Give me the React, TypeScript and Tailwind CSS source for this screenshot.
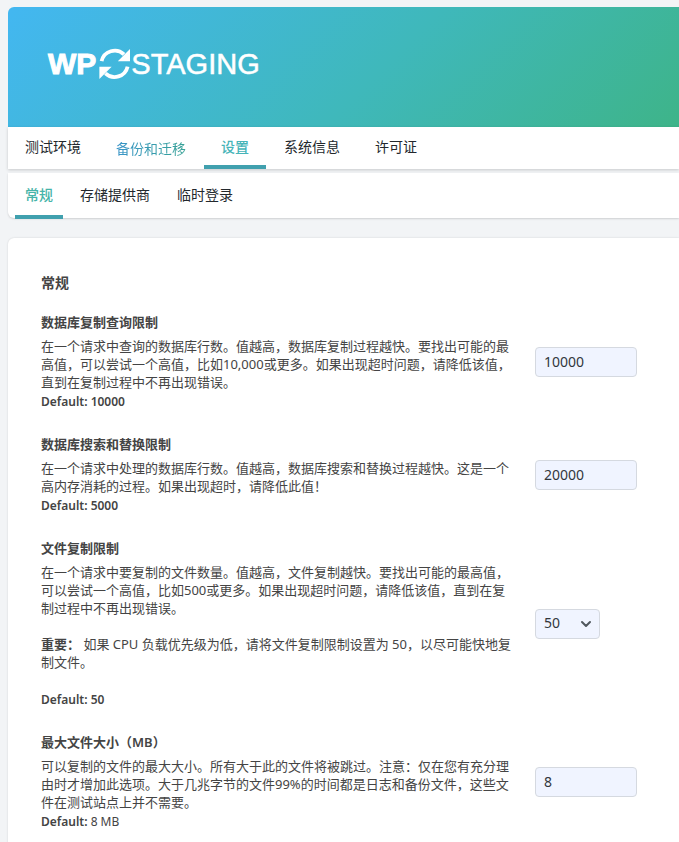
import { useState, type ReactNode } from "react";
import { ChevronDown } from "lucide-react";

const mainTabs = ["测试环境", "备份和迁移", "设置", "系统信息", "许可证"];
const subTabs = ["常规", "存储提供商", "临时登录"];

function Logo() {
  return (
    <a href="#" className="flex h-8 items-center font-['Liberation_Sans',Arial,sans-serif] text-[30px] leading-8 text-white">
      <span className="font-bold [-webkit-text-stroke:1px_white]">WP</span>
      <svg className="ml-[3px] h-8 w-8" viewBox="0 0 32 32" aria-hidden="true">
        <path d="M2.6 13.2A13.4 13.4 0 0 1 25 6.4" fill="none" stroke="currentColor" strokeWidth="3.8" />
        <path d="M31 1v12.3H18.8z" fill="currentColor" />
        <path d="M28.6 18.6A13.4 13.4 0 0 1 6.4 25.4" fill="none" stroke="currentColor" strokeWidth="3.8" />
        <path d="M.4 31V18.7h12.2z" fill="currentColor" />
      </svg>
      <span className="text-[29px] [-webkit-text-stroke:0.5px_white]">STAGING</span>
    </a>
  );
}

function Row({ id, title, children, control }: { id: string; title: string; children: ReactNode; control: ReactNode }) {
  return (
    <div className="flex items-center gap-6 py-3">
      <div className="w-[470px] shrink-0">
        <label htmlFor={id} className="mb-1.5 block font-semibold">
          {title}
        </label>
        <div>{children}</div>
      </div>
      {control}
    </div>
  );
}

function DefaultNote({ children }: { children: ReactNode }) {
  return <p className="mt-0.5 text-xs leading-[18px]">{children}</p>;
}

function NumberBox({ id, initial }: { id: string; initial: string }) {
  const [value, setValue] = useState(initial);
  return (
    <input
      id={id}
      type="text"
      inputMode="numeric"
      value={value}
      onChange={(e) => setValue(e.target.value)}
      className="h-[30px] w-[102px] rounded border border-[#d5d9e0] bg-[#f0f4ff] px-2 pb-0.5 text-sm text-[#32373c]"
    />
  );
}

export default function App() {
  return (
    <div className="min-h-screen overflow-x-hidden bg-[#f2f4f6] pt-[7px] pl-2 font-['Noto_Sans','Noto_Sans_CJK_SC',sans-serif] text-[13px] leading-[18px] text-[#444]">
      <header className="flex h-[120px] items-center rounded-tl-md bg-[linear-gradient(135deg,#43b7f1_0%,#3fb8bb_55%,#3eb489_100%)] px-10 pb-1.5">
        <Logo />
      </header>

      <nav className="mb-1 flex h-[42px] gap-px bg-white text-sm text-[#23282d] shadow-[0_1px_3px_rgba(0,0,0,0.18)]">
        {mainTabs.map((t) => (
          <a
            key={t}
            href="#"
            className={
              t === "设置"
                ? "border-b-4 border-[#40a0ae] px-[17px] pt-2.5 font-medium text-[#46b4b8]"
                : t === "备份和迁移"
                  ? "px-[17px] pt-3"
                  : "px-[17px] pt-2.5"
            }
          >
            {t === "备份和迁移" ? (
              <span className="bg-linear-to-r from-[#3a94c8] to-[#38a296] bg-clip-text text-transparent">{t}</span>
            ) : (
              t
            )}
          </a>
        ))}
      </nav>

      <nav className="flex h-[45px] gap-[7px] rounded-bl-md bg-white pl-[7px] text-sm text-[#23282d] shadow-[0_1px_2px_rgba(0,0,0,0.15)]">
        {subTabs.map((t, i) => (
          <a
            key={t}
            href="#"
            className={
              i === 0
                ? "h-[46px] border-b-4 border-[#40a0ae] px-2.5 pt-3 font-medium text-[#46b4a8]"
                : "px-2.5 pt-3"
            }
          >
            {t}
          </a>
        ))}
      </nav>

      <main className="mt-5 rounded-tl-md bg-white pt-[35px] pr-10 pb-8 pl-[33px] shadow-[0_0_2px_rgba(0,0,0,0.15)]">
        <h1 className="mb-2 text-sm font-semibold">常规</h1>

        <Row id="query-limit" title="数据库复制查询限制" control={<NumberBox id="query-limit" initial="10000" />}>
          <p>
            在一个请求中查询的数据库行数。值越高，数据库复制过程越快。要找出可能的最高值，可以尝试一个高值，比如10,000或更多。如果出现超时问题，请降低该值，直到在复制过程中不再出现错误。
          </p>
          <DefaultNote>
            <strong className="font-semibold">Default: 10000</strong>
          </DefaultNote>
        </Row>

        <Row id="replace-limit" title="数据库搜索和替换限制" control={<NumberBox id="replace-limit" initial="20000" />}>
          <p>
            在一个请求中处理的数据库行数。值越高，数据库搜索和替换过程越快。这是一个高内存消耗的过程。如果出现超时，请降低此值！
          </p>
          <DefaultNote>
            <strong className="font-semibold">Default: 5000</strong>
          </DefaultNote>
        </Row>

        <Row
          id="file-limit"
          title="文件复制限制"
          control={
            <div className="relative">
              <select
                id="file-limit"
                defaultValue="50"
                className="block h-[30px] w-[65px] appearance-none rounded border border-[#d5d9e0] bg-[#f0f4ff] px-2 pb-0.5 text-sm text-[#32373c]"
              >
                <option>10</option>
                <option>50</option>
                <option>250</option>
              </select>
              <ChevronDown className="pointer-events-none absolute top-[7px] right-1.5 size-4 text-[#50575e]" strokeWidth={3} />
            </div>
          }
        >
          <p>
            在一个请求中要复制的文件数量。值越高，文件复制越快。要找出可能的最高值，可以尝试一个高值，比如500或更多。如果出现超时问题，请降低该值，直到在复制过程中不再出现错误。
          </p>
          <p className="mt-[18px] mb-5">
            <strong className="font-semibold">重要：</strong> 如果 CPU 负载优先级为低，请将文件复制限制设置为 50，以尽可能快地复制文件。
          </p>
          <DefaultNote>
            <strong className="font-semibold">Default: 50</strong>
          </DefaultNote>
        </Row>

        <Row id="max-size" title="最大文件大小（MB）" control={<NumberBox id="max-size" initial="8" />}>
          <p>
            可以复制的文件的最大大小。所有大于此的文件将被跳过。注意：仅在您有充分理由时才增加此选项。大于几兆字节的文件99%的时间都是日志和备份文件，这些文件在测试站点上并不需要。
          </p>
          <DefaultNote>
            <strong className="font-semibold">Default:</strong> 8 MB
          </DefaultNote>
        </Row>
      </main>
    </div>
  );
}
